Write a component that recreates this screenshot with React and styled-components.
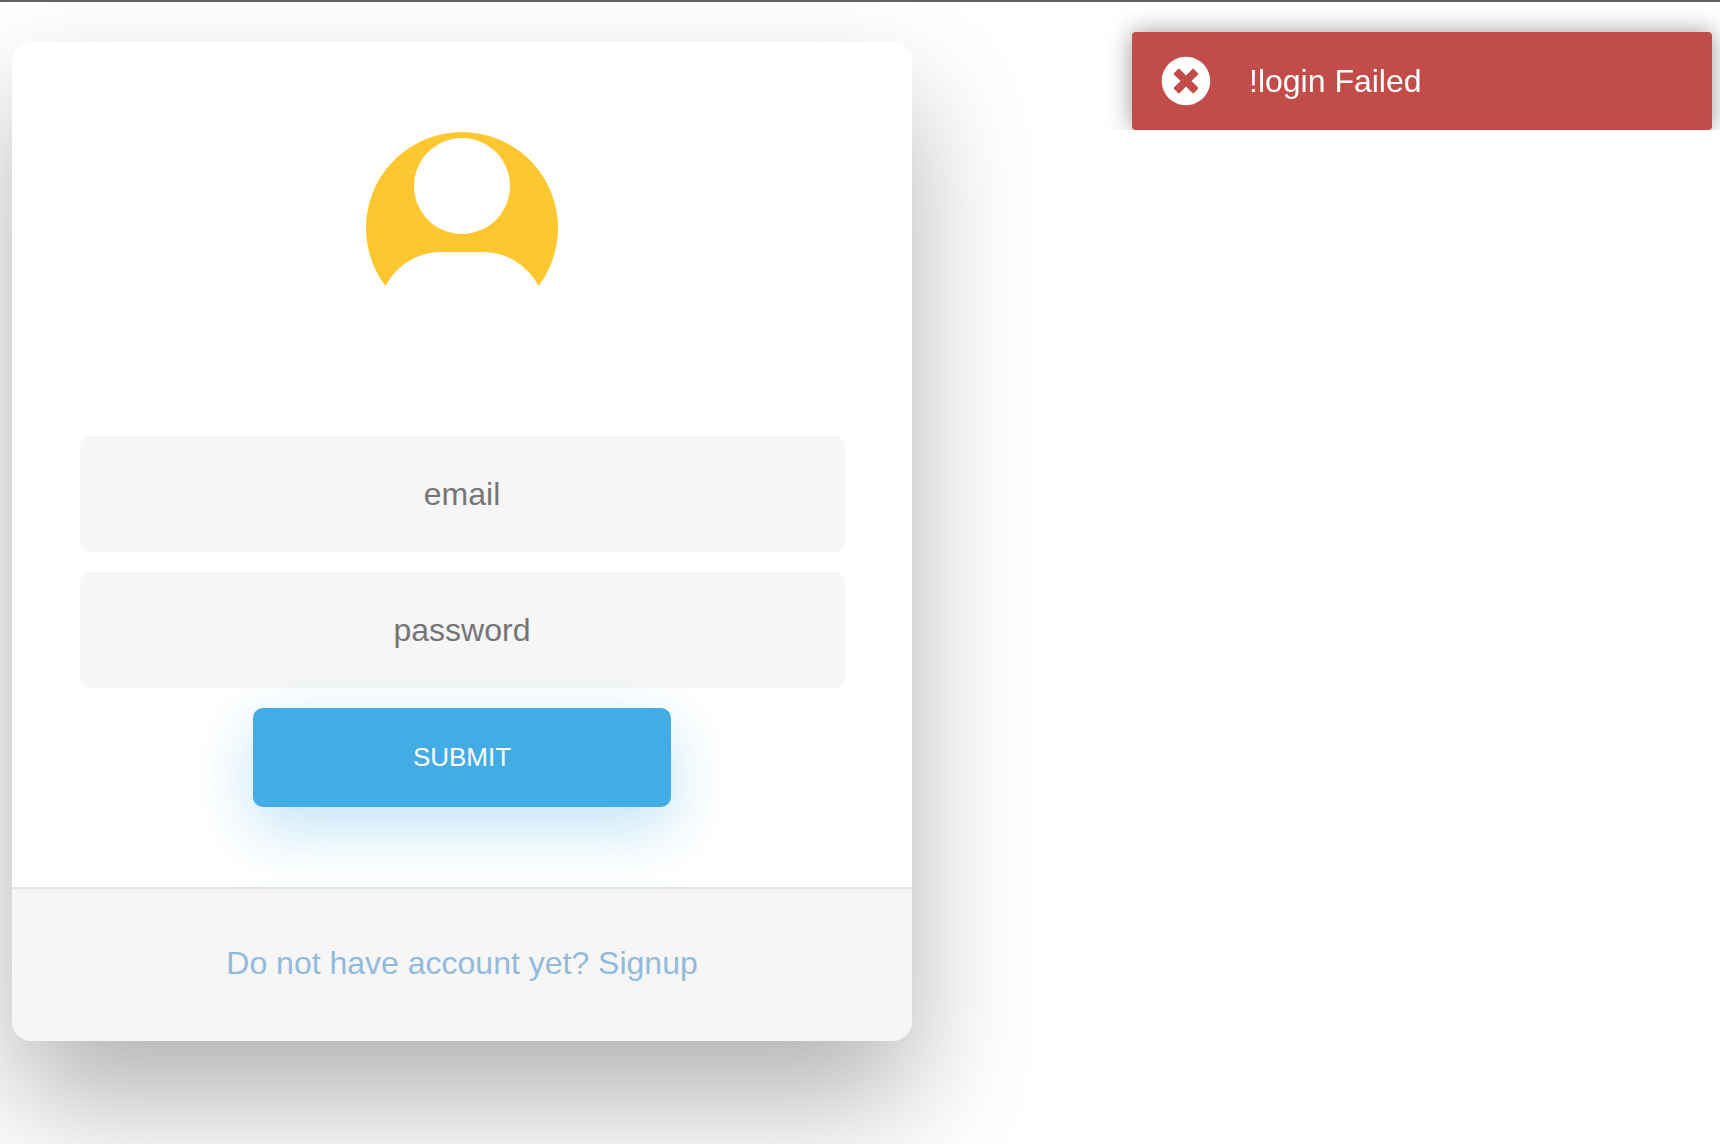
import React from "react";
import styled, { createGlobalStyle } from "styled-components";
import { FaTimesCircle } from "react-icons/fa";

const GlobalStyle = createGlobalStyle`
  *, *::before, *::after { box-sizing: border-box; }
  body {
    margin: 0;
    background: #fff;
    font-family: "Liberation Sans", Arial, Helvetica, sans-serif;
    font-size: 32px;
    line-height: 40px;
  }
`;

const Page = styled.main`
  min-height: 100vh;
  padding: 40px 12px;
  border-top: 2px solid #646068;
  overflow: hidden;
`;

const Card = styled.section`
  display: flex;
  flex-direction: column;
  width: 100%;
  max-width: 900px;
  border-radius: 20px;
  background: #fff;
  box-shadow: 0 60px 120px 0 rgba(0, 0, 0, 0.3);
  text-align: center;
`;

const AvatarArea = styled.div`
  display: flex;
  justify-content: center;
  padding: 90px 0 112px;
`;

const Avatar = styled.svg`
  display: block;
  width: 192px;
  height: 192px;
  fill: #ffc72f;
`;

const Form = styled.form`
  display: flex;
  flex-direction: column;
  align-items: center;
  gap: 20px;
  padding-bottom: 80px;
`;

const Input = styled.input`
  display: block;
  width: 85%;
  height: 116px;
  padding: 0 64px;
  border: 0;
  border-radius: 10px;
  background: #f6f6f6;
  color: #0d0d0d;
  font: inherit;
  text-align: center;

  &::placeholder {
    color: #757575;
    opacity: 1;
  }
`;

const SubmitButton = styled.button`
  position: relative;
  padding: 30px 160px;
  border: 0;
  border-radius: 10px;
  background: #43ace5;
  box-shadow: 0 20px 60px 0 rgba(95, 186, 233, 0.4);
  color: #fff;
  font-family: inherit;
  font-size: 26px;
  line-height: 39px;
  text-transform: uppercase;
  cursor: pointer;
`;

const CardFooter = styled.footer`
  padding: 54px 50px 58px;
  border-top: 2px solid #dce8f1;
  border-radius: 0 0 20px 20px;
  background: #f6f6f6;
`;

const SignupLink = styled.a`
  color: #92badd;
  text-decoration: none;
`;

const Toast = styled.div`
  position: fixed;
  top: 32px;
  right: 8px;
  display: flex;
  align-items: center;
  gap: 38px;
  width: 580px;
  max-width: calc(100% - 16px);
  padding: 24px 29px;
  border-radius: 4px;
  background: #c14c4a;
  box-shadow: 0 0 24px #999;
  clip-path: inset(-30px -30px 0 -30px);
  color: #fff;
`;

const ToastIcon = styled(FaTimesCircle)`
  flex: none;
  width: 50px;
  height: 50px;
`;

const fields = [
  { id: "email", type: "email" },
  { id: "password", type: "password" },
];

export default function App() {
  return (
    <>
      <GlobalStyle />
      <Page>
        <Card>
          <AvatarArea>
            <Avatar viewBox="0 0 192 192" role="img" aria-label="User">
              <path
                fillRule="evenodd"
                d="M19.5 154A96 96 0 1 1 172.5 154A62.3 62.3 0 0 0 117 120H75A62.3 62.3 0 0 0 19.5 154ZM96 6A48 48 0 1 0 96 102A48 48 0 1 0 96 6Z"
              />
            </Avatar>
          </AvatarArea>
          <Form onSubmit={(event) => event.preventDefault()}>
            {fields.map(({ id, type }) => (
              <Input key={id} id={id} name={id} type={type} placeholder={id} aria-label={id} />
            ))}
            <SubmitButton type="submit">Submit</SubmitButton>
          </Form>
          <CardFooter>
            <SignupLink href="#signup">Do not have account yet? Signup</SignupLink>
          </CardFooter>
        </Card>
      </Page>
      <Toast role="alert">
        <ToastIcon aria-hidden="true" />
        <span>!login Failed</span>
      </Toast>
    </>
  );
}
